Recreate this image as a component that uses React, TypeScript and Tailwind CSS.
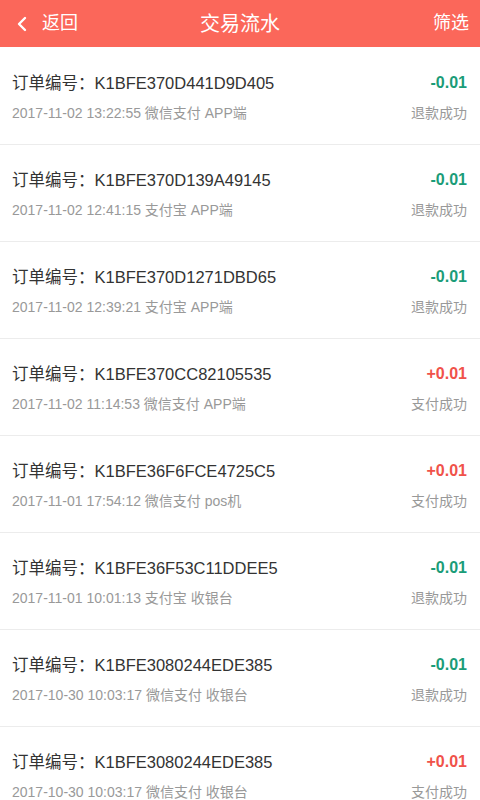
import { ChevronLeft } from 'lucide-react';

const rows = [
  { no: 'K1BFE370D441D9D405', time: '2017-11-02 13:22:55', pay: '微信支付', src: 'APP端', amt: '-0.01' },
  { no: 'K1BFE370D139A49145', time: '2017-11-02 12:41:15', pay: '支付宝', src: 'APP端', amt: '-0.01' },
  { no: 'K1BFE370D1271DBD65', time: '2017-11-02 12:39:21', pay: '支付宝', src: 'APP端', amt: '-0.01' },
  { no: 'K1BFE370CC82105535', time: '2017-11-02 11:14:53', pay: '微信支付', src: 'APP端', amt: '+0.01' },
  { no: 'K1BFE36F6FCE4725C5', time: '2017-11-01 17:54:12', pay: '微信支付', src: 'pos机', amt: '+0.01' },
  { no: 'K1BFE36F53C11DDEE5', time: '2017-11-01 10:01:13', pay: '支付宝', src: '收银台', amt: '-0.01' },
  { no: 'K1BFE3080244EDE385', time: '2017-10-30 10:03:17', pay: '微信支付', src: '收银台', amt: '-0.01' },
  { no: 'K1BFE3080244EDE385', time: '2017-10-30 10:03:17', pay: '微信支付', src: '收银台', amt: '+0.01' },
];

export default function App() {
  return (
    <div
      className="w-[480px] h-[800px] overflow-hidden bg-white"
      style={{ fontFamily: '"Liberation Sans", "Noto Sans CJK SC", sans-serif' }}>
      <header className="h-[47px] bg-[#fb675a] text-white flex items-center justify-between pl-[10px] pr-[11px] relative">
        <button type="button" className="flex items-center gap-[8px] text-[18px]">
          <ChevronLeft className="size-[24px]" strokeWidth={2.4} />
          <span>返回</span>
        </button>
        <h1 className="absolute left-1/2 -translate-x-1/2 text-[20px]">交易流水</h1>
        <button type="button" className="text-[18px]">筛选</button>
      </header>
      <ul className="mt-[1px]">
        {rows.map((r, i) => {
          const refund = r.amt.startsWith('-');
          return (
            <li
              key={i}
              className="h-[97px] border-b border-[#ececec] pl-[12px] pr-[13px] pt-[3px] flex flex-col justify-center gap-[8px]">
              <div className="flex items-center justify-between">
                <span className="text-[16.5px] text-[#333]">订单编号：{r.no}</span>
                <span
                  className={
                    refund
                      ? 'text-[16px] font-bold text-[#1a9c78]'
                      : 'text-[16px] font-bold text-[#f0524a]'
                  }>
                  {r.amt}
                </span>
              </div>
              <div className="flex items-center justify-between text-[14px] text-[#999]">
                <span>
                  {r.time} {r.pay} {r.src}
                </span>
                <span>{refund ? '退款成功' : '支付成功'}</span>
              </div>
            </li>
          );
        })}
      </ul>
    </div>
  );
}
